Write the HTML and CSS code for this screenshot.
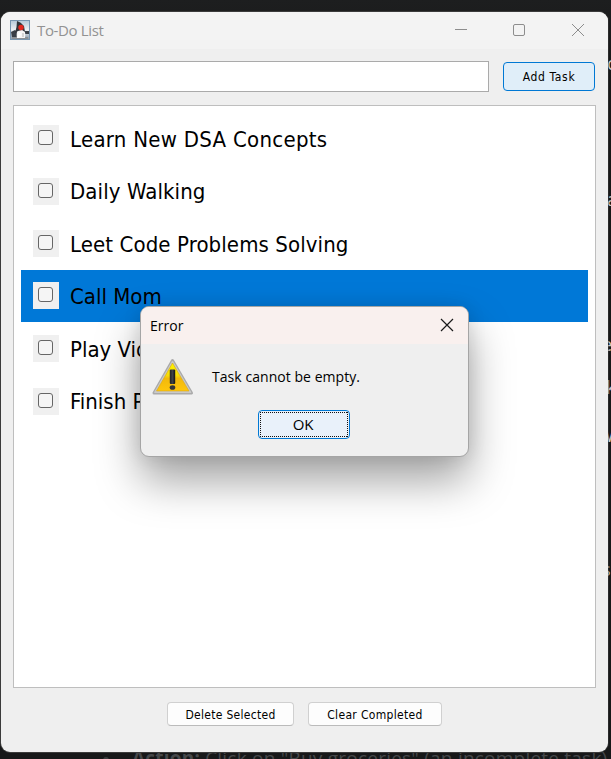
FILE: index.html
```html
<!DOCTYPE html>
<html lang="en">
<head>
<meta charset="utf-8">
<title>To-Do List</title>
<link rel="stylesheet" href="styles.css">
</head>
<body>
<div class="desktop">
  <span class="frag f1">c</span><span class="frag f2">a</span><span class="frag f3">e</span><span class="frag f4">k</span><span class="frag f5">W</span><span class="frag f6">s</span>
  <p class="behind"><i></i><b>Action:</b> <span>Click on "Buy groceries" (an incomplete task)</span></p>
  <main class="window">
    <header class="titlebar">
      <svg class="duke" width="20" height="20" viewBox="0 0 20 20">
        <defs><linearGradient id="sky" x1="0" y1="0" x2="0" y2="1"><stop offset="0" stop-color="#b4c8d8"/><stop offset=".5" stop-color="#eef1f4"/><stop offset="1" stop-color="#8597a8"/></linearGradient></defs>
        <rect x=".5" y=".5" width="19" height="19" fill="url(#sky)" stroke="#7896b0"/>
        <path d="M1 12l4-2 3 3-1 5-5-1zM15 11l4 0v3l-4 0z" fill="#3a4048"/>
        <path d="M2 17h16v2H2z" fill="#8a8f94"/>
        <path d="M8 8Q6 14 7 18H15Q16 12 13 8z" fill="#f6f6f6"/>
        <path d="M7 1Q11 2 14 6L15 12 12 10 8 11 5 13Q7 7 7 1z" fill="#30343a"/>
        <path d="M9 12l2 2-2 4H7z" fill="#fff"/>
        <path d="M12 13h2v4h-2z" fill="#d5d5d5"/>
        <circle cx="11" cy="7.500" r="2.700" fill="#e32820"/>
      </svg>
      <h1>To-Do List</h1>
      <svg class="controls" width="130" height="14" viewBox="0 0 130 14" fill="none" stroke="#8d8d8d">
        <path d="M1 6.500h12M118 1l12 12M130 1l-12 12"/>
        <rect x="59.500" y="1.500" width="11" height="11" rx="1.500"/>
      </svg>
    </header>
    <div class="entry"><div class="field"></div><div class="button add"><span>Add Task</span></div></div>
    <section class="list">
      <div class="row learn"><i class="check"></i><span>Learn New DSA Concepts</span></div>
      <div class="row walk"><i class="check"></i><span>Daily Walking</span></div>
      <div class="row code"><i class="check"></i><span>Leet Code Problems Solving</span></div>
      <div class="row selected"><i class="check"></i><span>Call Mom</span></div>
      <div class="row"><i class="check"></i><span>Play Video Games</span></div>
      <div class="row"><i class="check"></i><span>Finish Project</span></div>
    </section>
    <footer><div class="button delete"><span>Delete Selected</span></div><div class="button clear"><span>Clear Completed</span></div></footer>
  </main>
  <section class="dialog">
    <header><span>Error</span>
      <svg width="14" height="14" viewBox="0 0 14 14" stroke="#1a1a1a" stroke-width="1.200"><path d="M1 1l12 12M13 1L1 13"/></svg>
    </header>
    <div class="message">
      <svg width="42" height="38" viewBox="0 0 42 38">
        <defs>
          <linearGradient id="yellow" x1="0" y1="0" x2="0" y2="1"><stop offset="0" stop-color="#fff500"/><stop offset=".45" stop-color="#f5dc08"/><stop offset=".55" stop-color="#f2b90c"/><stop offset="1" stop-color="#ffc60c"/></linearGradient>
          <linearGradient id="mark" x1="0" y1="0" x2="1" y2="0"><stop offset="0" stop-color="#222"/><stop offset=".5" stop-color="#3d4148"/><stop offset="1" stop-color="#111"/></linearGradient>
        </defs>
        <path d="M20.500 2.500L39.500 35H2z" fill="#aaa" stroke="#aaa" stroke-width="3" stroke-linejoin="round"/>
        <path d="M20.500 3L39 34.500H2.500z" fill="#c9c9c9" stroke="#c9c9c9" stroke-linejoin="round"/>
        <path d="M20.500 5L37 33H4.500z" fill="url(#yellow)" stroke="#dca711" stroke-width=".6"/>
        <rect x="17.800" y="11.500" width="5.400" height="14.500" rx="1" fill="url(#mark)"/>
        <ellipse cx="20.500" cy="29.500" rx="2.800" ry="2.300" fill="#35363a"/>
      </svg>
      <span>Task cannot be empty.</span>
    </div>
    <div class="button ok"><svg width="88" height="25"><path d="M0 .5H88M0 24.500H88M.5 0V25M87.500 0V25" fill="none" stroke="#111" stroke-dasharray="1 1" shape-rendering="crispEdges"/></svg><span>OK</span></div>
  </section>
</div>
</body>
</html>
```
FILE: styles.css
```css
* { box-sizing: border-box; }
body { margin: 0; }
.desktop {
  position: relative;
  width: 611px;
  height: 759px;
  padding: 12px 0 0 1px;
  overflow: hidden;
  background: linear-gradient(#1d1e1f, #171717 80px, #171819);
  font-family: "DejaVu Sans Condensed", "DejaVu Sans", sans-serif;
  font-stretch: condensed;
  color: #000;
}
.frag {
  position: absolute;
  left: 607px;
  font: 18px/20px "Open Sans", sans-serif;
  color: #c8c8c8;
}
.f1 { top: 53px; }
.f2 { top: 189px; }
.f3 { top: 334px; left: 602px; }
.f4 { top: 377px; left: 606px; }
.f5 { top: 425px; left: 605px; }
.f6 { top: 559px; left: 602px; }
.behind {
  position: absolute;
  left: 103px;
  top: 748px;
  display: flex;
  margin: 0;
  font: 19px/20px "Open Sans", sans-serif;
  letter-spacing: .22px;
  color: #454749;
  white-space: nowrap;
}
.behind i {
  width: 6px;
  height: 6px;
  margin: 9px 23px 0 0;
  border-radius: 50%;
  background: #3b3d3e;
}
.behind b { margin-right: 5px; }
.window {
  position: relative;
  width: 607px;
  height: 740px;
  display: flex;
  flex-direction: column;
  border-radius: 9px;
  box-shadow: -1px 0 #3b3b3b, 0 -1px #3b3b3b, 0 1px #3b3b3b, 1px 0 rgba(70, 70, 70, .4);
  background: #efefef;
  overflow: hidden;
}
.titlebar {
  height: 37px;
  display: flex;
  align-items: center;
  padding: 0 24px 2px 9px;
  background: #f3f3f3;
}
.titlebar h1 {
  flex: 1;
  margin: 0 0 0 7px;
  font: 15px/20px "Open Sans", sans-serif;
  letter-spacing: -.35px;
  color: #929292;
}
.entry {
  display: flex;
  align-items: center;
  gap: 14px;
  margin: 12px 12px 0;
}
.field {
  width: 476px;
  height: 31px;
  flex: none;
  border: 1px solid #aaa;
  background: #fff;
}
.button {
  display: flex;
  align-items: center;
  justify-content: center;
  height: 24px;
  border: 1px solid #d0d0d0;
  border-bottom-color: #bbb;
  border-radius: 4px;
  background: #fdfdfd;
  font-size: 12px;
  white-space: nowrap;
}
.button span { padding-top: 1px; }
.add {
  width: 92px;
  height: 29px;
  border-color: #0078d4;
  background: #e0eef9;
  letter-spacing: .65px;
}
.list {
  width: 583px;
  height: 583px;
  margin: 13px 12px 0;
  padding: 6.400px 7px;
  border: 1px solid #bebebe;
  background: #fff;
}
.row {
  display: flex;
  align-items: center;
  height: 52.500px;
  padding: 0 12px;
  gap: 11px;
  font-size: 22px;
  line-height: 30px;
  white-space: nowrap;
}
.row span { padding-top: 2px; }
.learn { letter-spacing: .28px; }
.walk { letter-spacing: .1px; }
.code { letter-spacing: .1px; }
.selected { height: 52px; margin-bottom: .5px; background: #0078d7; }
.check {
  width: 26px;
  height: 27px;
  padding: 5px 0 0 5px;
  background: #f0f0f0;
}
.check::before {
  content: "";
  display: block;
  width: 13px;
  height: 13px;
  border: 1px solid #666;
  border-radius: 3px;
  background: #f5f5f5;
}
footer {
  display: flex;
  gap: 14px;
  margin: 14px 0 0 166px;
}
.delete { width: 127px; letter-spacing: .3px; }
.clear { width: 134px; letter-spacing: .33px; }
.dialog {
  position: absolute;
  left: 140px;
  top: 306px;
  width: 329px;
  height: 151px;
  border: 1px solid #a5a5a5;
  border-radius: 9px;
  background: #efefef;
  overflow: hidden;
  box-shadow: 0 24px 44px rgba(0, 0, 0, .36), 0 0 18px rgba(0, 0, 0, .1);
  font: 15px/20px "Open Sans", sans-serif;
}
.dialog header {
  height: 37px;
  display: flex;
  align-items: center;
  justify-content: space-between;
  padding: 0 14px 1px 9px;
  background: #f9f0ee;
  font-size: 14px;
}
.dialog header span { padding-top: 2px; }
.message {
  display: flex;
  align-items: center;
  gap: 18px;
  height: 38px;
  margin: 14px 0 0 11px;
  font-size: 14px;
  letter-spacing: .05px;
}
.ok {
  position: relative;
  width: 92px;
  height: 29px;
  margin: 14px 0 0 117px;
  border-color: #0078d4;
  background: #e9f1fa;
  font-size: 15px;
  letter-spacing: -.3px;
}
.ok span { padding: 0 2px 1px 0; }
.ok svg { position: absolute; left: 1px; top: 1px; }
```
